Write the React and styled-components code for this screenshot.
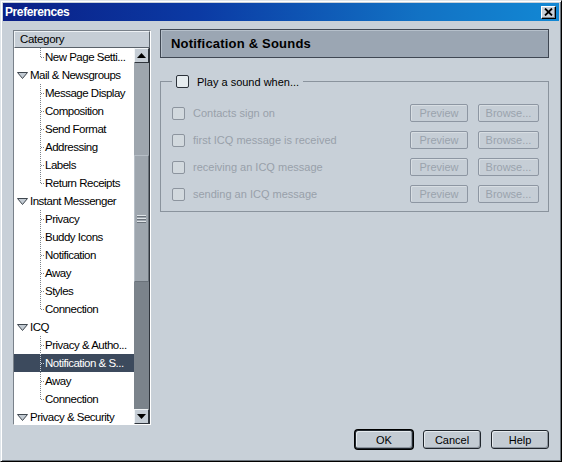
import React from "react";
import styled, { createGlobalStyle } from "styled-components";

const GlobalStyle = createGlobalStyle`
  html, body {
    margin: 0;
    padding: 0;
    background: #c8d0d8;
  }
`;

const TREE = [
  { label: "New Page Setti...", child: true, last: true },
  { label: "Mail & Newsgroups" },
  { label: "Message Display", child: true },
  { label: "Composition", child: true },
  { label: "Send Format", child: true },
  { label: "Addressing", child: true },
  { label: "Labels", child: true },
  { label: "Return Receipts", child: true, last: true },
  { label: "Instant Messenger" },
  { label: "Privacy", child: true },
  { label: "Buddy Icons", child: true },
  { label: "Notification", child: true },
  { label: "Away", child: true },
  { label: "Styles", child: true },
  { label: "Connection", child: true, last: true },
  { label: "ICQ" },
  { label: "Privacy & Autho...", child: true },
  { label: "Notification & S...", child: true, selected: true },
  { label: "Away", child: true },
  { label: "Connection", child: true, last: true },
  { label: "Privacy & Security" },
];

const SOUNDS = [
  "Contacts sign on",
  "first ICQ message is received",
  "receiving an ICQ message",
  "sending an ICQ message",
];

const Expander = () => (
  <svg width="11" height="7" viewBox="0 0 11 7">
    <polygon points="0.5,0.5 10.5,0.5 5.5,6.5" fill="#c3cbd3" stroke="#3f474f" strokeWidth="1" />
  </svg>
);

const Connector = ({ last, color }) => (
  <svg width="5" height="18" viewBox="0 0 5 18" shapeRendering="crispEdges">
    <line x1="0.5" y1="0" x2="0.5" y2={last ? 9 : 18} stroke={color} strokeDasharray="1 1" />
    <line x1="1" y1="9.5" x2="5" y2="9.5" stroke={color} strokeDasharray="1 1" />
  </svg>
);

const Arrow = ({ down }) => (
  <svg width="9" height="5" viewBox="0 0 9 5">
    <polygon points={down ? "0,0 9,0 4.5,5" : "0,5 9,5 4.5,0"} fill="#000" />
  </svg>
);

const CloseGlyph = () => (
  <svg width="9" height="8" viewBox="0 0 9 8">
    <path d="M1 0.5 L8 7.5 M8 0.5 L1 7.5" stroke="#000" strokeWidth="1.8" />
  </svg>
);

export default function App() {
  return (
    <>
      <GlobalStyle />
      <Window>
        <TitleBar>
          <Title>Preferences</Title>
          <CloseButton>
            <CloseGlyph />
          </CloseButton>
        </TitleBar>

        <Content>
          <Panes>
            <TreeBox>
              <TreeHeader>Category</TreeHeader>
              <TreeBody>
                <TreeList>
                  {TREE.map((item, i) => (
                    <TreeRow key={i} $child={item.child} $selected={item.selected}>
                      {item.child ? (
                        <Connector last={item.last} color={item.selected ? "#c8d0d8" : "#7c848c"} />
                      ) : (
                        <Expander />
                      )}
                      <TreeLabel>{item.label}</TreeLabel>
                    </TreeRow>
                  ))}
                </TreeList>
                <ScrollBar>
                  <ScrollButton>
                    <Arrow />
                  </ScrollButton>
                  <ScrollTrack>
                    <TrackSpace $height={92} />
                    <Thumb>
                      <Grip />
                      <Grip />
                      <Grip />
                    </Thumb>
                    <TrackSpace $dark />
                  </ScrollTrack>
                  <ScrollButton>
                    <Arrow down />
                  </ScrollButton>
                </ScrollBar>
              </TreeBody>
            </TreeBox>

            <Main>
              <PageHeader>Notification &amp; Sounds</PageHeader>
              <Group>
                <Legend>
                  <CheckBox />
                  <span>Play a sound when...</span>
                </Legend>
                {SOUNDS.map(label => (
                  <SoundRow key={label}>
                    <CheckBox $disabled />
                    <SoundLabel>{label}</SoundLabel>
                    <SmallButton $width={58}>Preview</SmallButton>
                    <SmallButton $width={61}>Browse...</SmallButton>
                  </SoundRow>
                ))}
              </Group>
            </Main>
          </Panes>

          <Footer>
            <DialogButton $default>OK</DialogButton>
            <DialogButton>Cancel</DialogButton>
            <DialogButton>Help</DialogButton>
          </Footer>
        </Content>
      </Window>
    </>
  );
}

const Window = styled.div`
  width: 562px;
  height: 462px;
  box-sizing: border-box;
  background: #c8d0d8;
  border: 1px solid;
  border-color: #dfe5ea #000 #000 #dfe5ea;
  box-shadow: inset 1px 1px 0 #fff, inset -1px -1px 0 #6c747c;
  padding: 2px;
  display: flex;
  flex-direction: column;
  font-family: "Liberation Sans", Arial, sans-serif;
  font-size: 11px;
  color: #000;
`;

const TitleBar = styled.div`
  height: 18px;
  flex-shrink: 0;
  display: flex;
  align-items: center;
  justify-content: space-between;
  padding: 0 3px 0 2px;
  background: linear-gradient(to right, #0a1f86 0%, #0b3aa4 35%, #1272c4 75%, #1288d4 100%);
`;

const Title = styled.span`
  color: #fff;
  font-weight: bold;
  font-size: 12px;
  letter-spacing: -0.4px;
`;

const CloseButton = styled.div`
  width: 15px;
  height: 13px;
  box-sizing: border-box;
  background: #c8d0d8;
  border: 1px solid;
  border-color: #fff #000 #000 #fff;
  box-shadow: inset -1px -1px 0 #7c848c;
  display: flex;
  align-items: center;
  justify-content: center;
`;

const Content = styled.div`
  flex: 1;
  display: flex;
  flex-direction: column;
  padding: 9px 10px 0 10px;
`;

const Panes = styled.div`
  display: flex;
  gap: 9px;
  align-items: flex-start;
`;

const TreeBox = styled.div`
  width: 138px;
  height: 395px;
  box-sizing: border-box;
  border: 1px solid;
  border-color: #79818a #fff #fff #79818a;
  display: flex;
  flex-direction: column;
  overflow: hidden;
`;

const TreeHeader = styled.div`
  height: 17px;
  box-sizing: border-box;
  flex-shrink: 0;
  background: #c6ced6;
  border: 1px solid;
  border-color: #eef2f5 #5a626a #5a626a #eef2f5;
  padding-left: 5px;
  line-height: 15px;
  font-size: 11.5px;
  letter-spacing: -0.3px;
`;

const TreeBody = styled.div`
  flex: 1;
  display: flex;
  min-height: 0;
`;

const TreeList = styled.div`
  width: 120px;
  background: #fff;
  overflow: hidden;
`;

const TreeRow = styled.div`
  height: 18px;
  display: flex;
  align-items: center;
  gap: ${props => (props.$child ? "0" : "2px")};
  padding-left: ${props => (props.$child ? "26px" : "3px")};
  background: ${props => (props.$selected ? "#3c4a5d" : "transparent")};
  color: ${props => (props.$selected ? "#fff" : "#000")};
  white-space: nowrap;
  font-size: 11.5px;
  letter-spacing: -0.5px;
`;

const TreeLabel = styled.span`
  line-height: 18px;
`;

const ScrollBar = styled.div`
  width: 15px;
  border-right: 1px solid #2f353c;
  display: flex;
  flex-direction: column;
  background: #9ea6ae;
`;

const ScrollButton = styled.div`
  height: 15px;
  flex-shrink: 0;
  box-sizing: border-box;
  background: #c6ced6;
  border: 1px solid;
  border-color: #f2f5f7 #2f353c #2f353c #f2f5f7;
  display: flex;
  align-items: center;
  justify-content: center;
`;

const ScrollTrack = styled.div`
  flex: 1;
  display: flex;
  flex-direction: column;
`;

const TrackSpace = styled.div`
  height: ${props => (props.$height ? `${props.$height}px` : "auto")};
  flex: ${props => (props.$height ? "none" : "1")};
  background: ${props => (props.$dark ? "#7b838b" : "#9ea6ae")};
`;

const Thumb = styled.div`
  height: 127px;
  box-sizing: border-box;
  background: #9ea6ae;
  border: 1px solid;
  border-color: #b6bec6 #6a727a #6a727a #b6bec6;
  display: flex;
  flex-direction: column;
  align-items: center;
  justify-content: center;
  gap: 2px;
`;

const Grip = styled.div`
  width: 9px;
  height: 1px;
  background: #dfe4e8;
  box-shadow: 0 1px 0 #6a727a;
`;

const Main = styled.div`
  width: 389px;
  margin-top: -1px;
  display: flex;
  flex-direction: column;
`;

const PageHeader = styled.div`
  height: 29px;
  box-sizing: border-box;
  background: #9ba6b3;
  border: 1px solid #3f4753;
  box-shadow: inset 1px 1px 0 #b6c0cb;
  padding-left: 10px;
  display: flex;
  align-items: center;
  font-size: 13px;
  font-weight: bold;
  letter-spacing: 0.2px;
`;

const Group = styled.fieldset`
  margin: 17px 0 0 0;
  padding: 16px 9px 8px 11px;
  border: 1px solid #8a939d;
  display: flex;
  flex-direction: column;
  gap: 9px;
`;

const Legend = styled.legend`
  padding: 0 4px;
  display: flex;
  align-items: center;
  gap: 8px;
  font-size: 11px;
`;

const CheckBox = styled.span`
  width: 13px;
  height: 13px;
  box-sizing: border-box;
  flex-shrink: 0;
  border-radius: 2px;
  border: 1px solid ${props => (props.$disabled ? "#8c949e" : "#2c323a")};
  background: ${props => (props.$disabled ? "#d2d9de" : "#e6ecef")};
`;

const SoundRow = styled.div`
  height: 18px;
  display: flex;
  align-items: center;
  gap: 8px;
`;

const SoundLabel = styled.span`
  flex: 1;
  color: #98a0aa;
  font-size: 11px;
`;

const SmallButton = styled.div`
  width: ${props => props.$width}px;
  height: 18px;
  box-sizing: border-box;
  margin-left: 2px;
  border: 1px solid #8d96a2;
  border-radius: 2px;
  background: #c6ced6;
  box-shadow: inset 1px 1px 0 #d8dee3;
  color: #9aa3ad;
  display: flex;
  align-items: center;
  justify-content: center;
  font-size: 11px;
`;

const Footer = styled.div`
  display: flex;
  justify-content: flex-end;
  gap: 10px;
  margin-top: 5px;
`;

const DialogButton = styled.div`
  width: 58px;
  height: 19px;
  box-sizing: border-box;
  border: 1px solid #20262d;
  border-radius: 3px;
  background: #c3cbd3;
  box-shadow: inset 1px 1px 0 #e6ebef, inset -1px -1px 0 #8e96a0
    ${props => (props.$default ? ", 0 0 0 1px #000" : "")};
  display: flex;
  align-items: center;
  justify-content: center;
  font-size: 11px;
`;
